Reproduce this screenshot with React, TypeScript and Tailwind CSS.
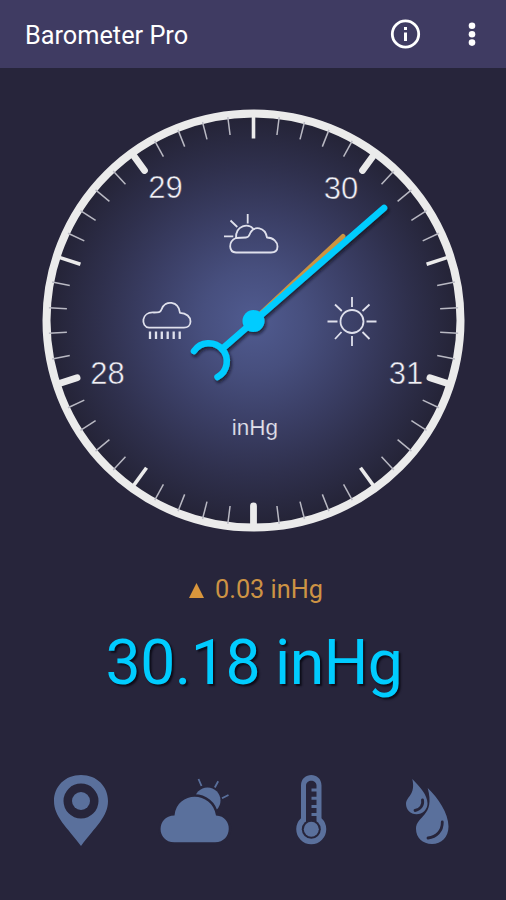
import type { ReactNode } from "react";

const CX = 253.5;
const CY = 252.5;

// 50 ticks, one every 7.2 degrees
const ticks = Array.from({ length: 50 }, (_, i) => i);
const numbered = [5, 15, 25, 35, 45];

type Label = {
  text: string;
  x: number;
  y: number;
};

const labels: Label[] = [
  { text: "28", x: 107.5, y: 315.5 },
  { text: "29", x: 165.5, y: 129.5 },
  { text: "30", x: 341, y: 130.5 },
  { text: "31", x: 406, y: 315.5 },
];

function Tick({ index }: { index: number }) {
  const major = numbered.includes(index);
  const half = !major && index % 5 === 0;

  return (
    <line
      x1={CX}
      x2={CX}
      y1={CY - 205}
      y2={CY - (major ? 185.5 : half ? 182 : 187)}
      transform={`rotate(${index * 7.2} ${CX} ${CY})`}
      stroke={major || half ? "#ebebeb" : "#b9b9c3"}
      strokeWidth={major ? 6.8 : half ? 3.6 : 1.5}
      strokeLinecap={major ? "round" : "butt"}
    />
  );
}

function Dial() {
  return (
    <svg width="506" height="480" viewBox="0 0 506 480" className="block">
      <defs>
        <radialGradient id="dial" gradientUnits="userSpaceOnUse" cx={CX} cy={CY} r="206">
          <stop offset="0" stopColor="#505b90" />
          <stop offset="0.25" stopColor="#474f7e" />
          <stop offset="0.5" stopColor="#3b3f66" />
          <stop offset="0.75" stopColor="#2f304d" />
          <stop offset="1" stopColor="#242336" />
        </radialGradient>
        <filter id="shadow" x="-20%" y="-20%" width="140%" height="140%">
          <feDropShadow dx="1.5" dy="2.5" stdDeviation="1.5" floodColor="#0c0c1c" floodOpacity="0.75" />
        </filter>
      </defs>

      <circle cx={CX} cy={CY} r="207" fill="url(#dial)" stroke="#ebebeb" strokeWidth="8" />
      {ticks.map((i) => (
        <Tick key={i} index={i} />
      ))}

      {/* Outline in the dial gradient slims the digits down */}
      {labels.map((l) => (
        <text
          key={l.text}
          x={l.x}
          y={l.y}
          textAnchor="middle"
          fill="#f0f0f6"
          stroke="url(#dial)"
          strokeWidth="0.5"
          className="font-['Liberation_Sans',sans-serif] text-[31px]"
        >
          {l.text}
        </text>
      ))}
      <text
        x="255"
        y="367"
        textAnchor="middle"
        fill="#e2e2ec"
        stroke="url(#dial)"
        strokeWidth="0.2"
        className="font-['Liberation_Sans',sans-serif] text-[22.5px]"
      >
        inHg
      </text>

      {/* Weather symbols */}
      <g fill="none" stroke="#dfe0ec" strokeWidth="1.8" strokeLinejoin="round">
        <path d="M236 184.500C228.500 184 228 173.500 236 170L246 169.500C249.500 169.500 249.500 166 250.500 164.500C254 158 265 158.500 267 169.500C273.500 169.500 277.500 174 277.500 178.500C277.500 182.500 275 184.500 271 184.500Z" />
        <path d="M236 170C235.500 157.500 248.500 154.500 253.500 161" />
        <path d="M247.700 146V155.500M230.500 152.500L237.300 159M224 168.300H233.300" />
        <path d="M149 259.700C140.500 259 141 243.500 154 244.500C158.500 244.500 160.500 244.500 161.500 241.500C165 231.500 178.500 233 180 244.800C186.500 245 190.500 249 190.500 253.500C190.500 257.500 187.500 259.700 184 259.700Z" />
        <path d="M150 263.500V271M156 263.500V271M161.800 263.500V271M167.700 263.500V271M173.700 263.500V271M179.700 263.500V271" strokeWidth="2.300" />
        <circle cx="352" cy="253.500" r="11.500" />
        <path d="M352 229V239M352 268V278M327.500 253.500H337.500M366.500 253.500H376.500M335 236.500L341.800 243M362.500 264L369.500 271M369.500 236.500L362.500 243M341.500 264L335 271" />
      </g>

      <path d="M253.500 252.500L343 168.500" stroke="#cc9440" strokeWidth="5" strokeLinecap="round" />
      <g filter="url(#shadow)" fill="none" stroke="#00ccff" strokeWidth="6.500" strokeLinecap="round">
        <path d="M384 140L222 281" />
        <path d="M194 283A18 18 0 1 1 217.500 309" />
        <circle cx={CX} cy={CY + 0.5} r="11" fill="#00ccff" stroke="none" />
      </g>
    </svg>
  );
}

function NavButton({ label, children }: { label: string; children: ReactNode }) {
  return (
    <button aria-label={label} className="flex-1 h-20 cursor-pointer">
      <svg width="115" height="80" viewBox="0 0 115 80" fill="#5a709c">
        {children}
      </svg>
    </button>
  );
}

export default function App() {
  return (
    <div className="w-[506px] h-[900px] flex flex-col bg-[#27253b] overflow-hidden font-['Roboto',sans-serif]">
      <header className="h-[68px] shrink-0 flex items-center justify-between bg-[#3f3b62] pl-[25px] text-white">
        <h1 className="pt-[3px] text-[25.3px] leading-none">Barometer Pro</h1>
        <svg width="131" height="68" viewBox="0 0 131 68">
          <circle cx="30.500" cy="34" r="13.200" fill="none" stroke="#fff" strokeWidth="2.800" />
          <path d="M29 27h3v3h-3zM29 32.500h3v8.500h-3z" fill="#fff" />
          <g fill="#fff">
            <circle cx="97" cy="25.800" r="3.300" />
            <circle cx="97" cy="34.200" r="3.300" />
            <circle cx="97" cy="42.600" r="3.300" />
          </g>
        </svg>
      </header>

      <Dial />

      {/* Change and current pressure */}
      <div className="h-[28px] mt-[28px] flex items-center justify-center gap-[11px] pl-[6px] text-[#cd9344]">
        <svg width="15" height="15" viewBox="0 0 15 15">
          <path d="M7.500 0L15 15H0z" fill="#d9963c" />
        </svg>
        <span className="text-[25.3px] leading-none">0.03 inHg</span>
      </div>
      <div className="mt-[23px] pl-[2px] text-center text-[62.5px] leading-[72px] tracking-[-0.5px] text-[#00ccff] [text-shadow:2px_2px_2px_#0d0c18]">
        30.18 inHg
      </div>

      <nav className="mt-[71px] flex px-[23px]">
        <NavButton label="Location">
          <path
            fillRule="evenodd"
            d="M58 5C42 5 31 16.500 31 31C31 47 44 57 58 76C72 57 85 47 85 31C85 16.500 74 5 58 5ZM58 13.500a17.500 17.500 0 1 1 0 35a17.500 17.500 0 1 1 0-35Z"
          />
          <circle cx="58" cy="31" r="9" />
        </NavButton>

        <NavButton label="Forecast">
          <circle cx="69.500" cy="30.500" r="13" />
          <path
            d="M60.500 9L63.500 16M80.200 11.300L76.800 17.500M90.500 25L84 28.300"
            stroke="#5a709c"
            strokeWidth="1.800"
          />
          <path
            d="M36.500 72.300C18 72.300 18 45.500 36.500 45.500C39 20.500 74 20.500 78 45.500C95.500 46 95 72.300 77 72.300Z"
            stroke="#27253b"
            strokeWidth="5"
            paintOrder="stroke"
          />
        </NavButton>

        <NavButton label="Temperature">
          <path d="M48 15.500C48 1.500 68.500 1.500 68.500 15.500V48.300A15 15 0 1 1 48 48.300Z" />
          <path d="M53 15.500C53 9 63.500 9 63.500 15.500V53H53Z" fill="#27253b" />
          <circle cx="58.300" cy="59.300" r="9.500" fill="#27253b" />
          <circle cx="58.300" cy="59.300" r="7.500" />
          <path d="M58.500 20H65M58.500 28.300H65M58.500 36.500H65M58.500 44.500H65" stroke="#5a709c" strokeWidth="3" />
        </NavButton>

        <NavButton label="Humidity">
          <path d="M44.300 9C52 17 59.500 25 59.500 33.500C59.500 39.500 54.500 44.300 48.500 44.300C42.500 44.300 38 39.500 38 34C38 26.500 48 25 44.300 9Z" />
          <path d="M59.700 18C70 28 80.500 43 80.500 56.500C80.500 67 73.500 74 64 74C54.500 74 48 67.500 48 59C48 45.500 67.500 47 59.700 18Z" />
          <path
            d="M54.500 29.800C55.500 35 52.500 39.500 47 40.500M74.300 52C74.500 61 68.500 67 60 68"
            fill="none"
            stroke="#27253b"
            strokeWidth="2.800"
            strokeLinecap="round"
          />
        </NavButton>
      </nav>
    </div>
  );
}
